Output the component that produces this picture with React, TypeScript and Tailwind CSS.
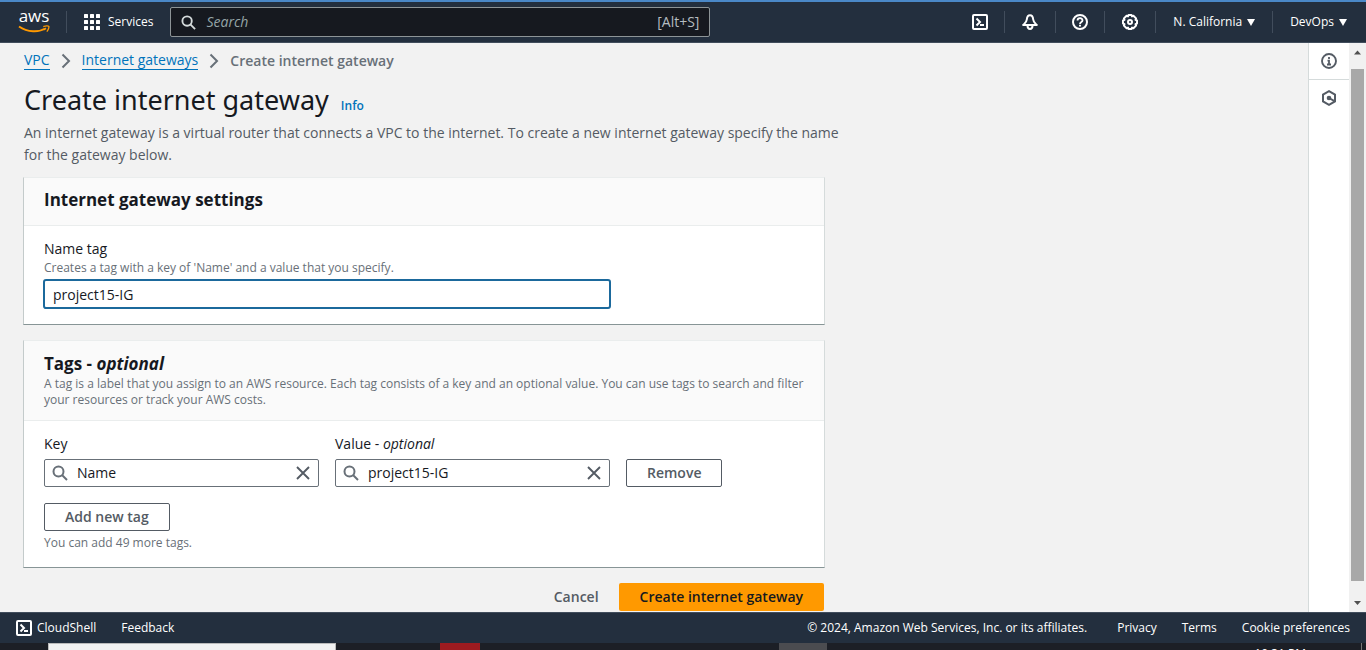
import React, { useState } from "react";

const divider = "h-[22px] w-px bg-[#414d5c]";

function TerminalIcon() {
  return (
    <svg viewBox="0 0 16 16" className="size-4 shrink-0" fill="none" stroke="currentColor" strokeWidth="2" strokeLinejoin="round">
      <rect x="1" y="1" width="14" height="14" rx="1" />
      <path d="M4.500 4.500 8 8l-3.500 3.500" strokeLinejoin="miter" />
      <path d="M8 11h4" />
    </svg>
  );
}

function BellIcon() {
  return (
    <svg viewBox="0 0 16 16" className="size-4" fill="none" stroke="currentColor" strokeWidth="2" strokeLinejoin="round">
      <path d="M8 1.200C5.800 1.200 5 3 4.800 5.500 4.600 8 3 9 1.200 11h13.600C13 9 11.400 8 11.200 5.500 11 3 10.200 1.200 8 1.200z" />
      <path d="M5.500 11.500c0 4.600 5 4.600 5 0" />
    </svg>
  );
}

function HelpIcon() {
  return (
    <svg viewBox="0 0 16 16" className="size-4" fill="none" stroke="currentColor" strokeWidth="2">
      <circle cx="8" cy="8" r="7" />
      <path d="M5.500 6.600C5.500 3.400 10.500 3.400 10.500 6.400 10.500 8 8 7.900 8 9.900" strokeWidth="1.800" />
      <path d="M8 10.700v1.800" strokeWidth="2" />
    </svg>
  );
}

function GearIcon() {
  return (
    <svg viewBox="0 0 16 16" className="size-4" fill="none" stroke="currentColor" strokeWidth="2" strokeLinejoin="round">
      <path d="M6.500 1h3l.5 1.400 1.400-.7 2.700 2.700-.6 1.500 1.500.6v3l-1.500.6.6 1.500-2.700 2.700-1.400-.7L9.500 15h-3L6 13.600l-1.400.7-2.700-2.700.6-1.500L1 9.500v-3l1.500-.6-.6-1.500 2.700-2.700 1.400.7z" />
      <circle cx="8" cy="8" r="2" />
    </svg>
  );
}

function SearchIcon({ className }: { className: string }) {
  return (
    <svg viewBox="0 0 16 16" className={className} fill="none" stroke="currentColor" strokeWidth="2">
      <circle cx="6.500" cy="6.500" r="5" />
      <path d="m10 10 5 5" />
    </svg>
  );
}

function CloseIcon() {
  return (
    <svg viewBox="0 0 16 16" className="size-4" fill="none" stroke="currentColor" strokeWidth="1.900">
      <path d="m2 2 12 12M14 2 2 14" />
    </svg>
  );
}

function Caret() {
  return (
    <svg viewBox="0 0 8 7" className="h-[7px] w-2" fill="currentColor">
      <path d="M0 0h8L4 7z" />
    </svg>
  );
}

function Chevron() {
  return (
    <svg viewBox="0 0 10 16" className="h-4 w-[10px] text-[#687078]" fill="none" stroke="currentColor" strokeWidth="2">
      <path d="m1.500 1.500 6.500 6.500-6.500 6.500" />
    </svg>
  );
}

function AwsLogo() {
  return (
    <a href="#home" aria-label="AWS home" className="flex w-8 flex-col items-center text-white">
      <span className="h-[14px] text-[17px] leading-[10px]">aws</span>
      <svg viewBox="0 0 32 9" className="h-[9px] w-8">
        <path d="M1 1.500C9.500 7.500 21 7.500 28 3.300" fill="none" stroke="#f90" strokeWidth="1.900" />
        <path d="M25.300 1.600c2-.8 5-.9 5.500-.2.400.8-.6 3.800-2 5.200" fill="none" stroke="#f90" strokeWidth="1.300" />
      </svg>
    </a>
  );
}

function Header() {
  return (
    <header className="flex h-[43px] shrink-0 items-center border-t-2 border-b border-t-[#4a88c7] border-b-[#414d5c] bg-[#232f3e] text-xs font-medium text-white">
      <div className="flex items-center pl-[18px]">
        <AwsLogo />
        <span className={`${divider} ml-4`} />
        <button className="ml-[17px] flex items-center gap-2">
          <svg viewBox="0 0 16 16" className="size-4" fill="currentColor">
            {[0, 6, 12].map((y) => [0, 6, 12].map((x) => <rect key={`${x}-${y}`} x={x} y={y} width="4" height="4" rx=".5" />))}
          </svg>
          Services
        </button>
      </div>
      <label className="ml-[17px] flex h-[30px] w-[540px] items-center rounded-[2px] border border-[#8d9496] bg-[#16191f] px-[10px] text-[#d5dbdb]">
        <SearchIcon className="size-[15px]" />
        <input aria-label="Search" placeholder="Search" className="ml-[10px] min-w-0 flex-1 bg-transparent text-sm font-normal outline-none placeholder:italic placeholder:text-[#95a5a6]" />
        <span className="text-sm font-normal text-[#b5bcc0]">[Alt+S]</span>
      </label>
      <div className="ml-auto flex items-center pr-[19px]">
        <button aria-label="CloudShell"><TerminalIcon /></button>
        <span className={`${divider} mx-4`} />
        <button aria-label="Notifications" className="px-px"><BellIcon /></button>
        <span className={`${divider} mx-4`} />
        <button aria-label="Help"><HelpIcon /></button>
        <span className={`${divider} mx-4`} />
        <button aria-label="Settings" className="px-px"><GearIcon /></button>
        <span className={`${divider} ml-4`} />
        <button className="ml-[17px] flex items-center gap-[5px]">N. California <Caret /></button>
        <span className={`${divider} mx-[17px]`} />
        <button className="flex items-center gap-[5px]">DevOps <Caret /></button>
      </div>
    </header>
  );
}

function Panel({ children }: { children: React.ReactNode }) {
  return (
    <section className="border border-t-[#eaeded] border-r-[#d5dbdb] border-b-[#879596] border-l-[#c4cbcb] bg-white">
      {children}
    </section>
  );
}

function TagField({ id, label, optional, value, onChange }: { id: string; label: string; optional?: boolean; value: string; onChange: (v: string) => void }) {
  return (
    <div className="w-[275px]">
      <label htmlFor={id} className="block leading-[22px]">
        {label}
        {optional && <> - <i>optional</i></>}
      </label>
      <div className="mt-1 flex h-7 items-center rounded-[2px] border border-[#687078] px-[7px] text-[#545b64]">
        <SearchIcon className="size-4 text-[#687078]" />
        <input id={id} value={value} onChange={(e) => onChange(e.target.value)} className="ml-[9px] min-w-0 flex-1 text-[#16191f] outline-none" />
        <button aria-label={`Clear ${label}`} onClick={() => onChange("")}><CloseIcon /></button>
      </div>
    </div>
  );
}

const outlineButton = "h-7 rounded-[2px] border border-[#545b64] bg-white px-5 font-semibold text-[#545b64]";

export default function App() {
  const [name, setName] = useState("project15-IG");
  const [key, setKey] = useState("Name");
  const [value, setValue] = useState("project15-IG");

  return (
    <div className="flex h-screen flex-col overflow-hidden bg-[#f2f2f2] font-['Open_Sans','Noto_Sans',sans-serif] text-sm text-[#16191f]">
      <Header />
      <div className="flex min-h-0 flex-1">
        <main className="min-w-0 flex-1 overflow-hidden px-6">
          <div className="max-w-[800px]">
            <nav aria-label="Breadcrumb" className="flex h-[35px] items-center gap-[11px] text-[#0073bb]">
              <a href="#vpc" className="border-b border-current leading-[18px]">VPC</a>
              <Chevron />
              <a href="#gateways" className="border-b border-current leading-[18px]">Internet gateways</a>
              <Chevron />
              <span className="font-semibold text-[#687078]">Create internet gateway</span>
            </nav>
            <div className="flex items-baseline gap-3">
              <h1 className="font-['Noto_Sans','Open_Sans',sans-serif] text-[27px] leading-[44px]">Create internet gateway</h1>
              <a href="#info" className="text-xs font-semibold text-[#0073bb]">Info</a>
            </div>
            <p className="-mr-5 leading-[22px] text-[#545b64]">
              An internet gateway is a virtual router that connects a VPC to the internet. To create a new internet gateway specify the name for the gateway below.
            </p>
            <div className="-mx-px mt-[11px] flex flex-col gap-[15px]">
              <Panel>
                <h2 className="border-b border-[#eaeded] bg-[#fafafa] px-5 pt-[11px] pb-[14px] text-[17px] leading-[22px] font-bold">Internet gateway settings</h2>
                <div className="px-5 pt-3 pb-[15px]">
                  <label htmlFor="name-tag" className="block leading-[22px]">Name tag</label>
                  <p className="text-xs leading-4 text-[#687078]">Creates a tag with a key of 'Name' and a value that you specify.</p>
                  <input
                    id="name-tag"
                    value={name}
                    onChange={(e) => setName(e.target.value)}
                    className="-mx-px mt-[3px] block h-[30px] w-[568px] rounded-[3px] border-2 border-[#1b699c] px-2 outline-none"
                  />
                </div>
              </Panel>
              <Panel>
                <div className="border-b border-[#eaeded] bg-[#fafafa] px-5 pt-[10px] pb-3">
                  <h2 className="text-[17px] leading-[25px] font-bold">Tags - <i>optional</i></h2>
                  <p className="-mr-1 text-xs leading-4 text-[#687078]">
                    A tag is a label that you assign to an AWS resource. Each tag consists of a key and an optional value. You can use tags to search and filter your resources or track your AWS costs.
                  </p>
                </div>
                <div className="px-5 pt-3 pb-4">
                  <div className="flex items-end gap-4">
                    <TagField id="tag-key" label="Key" value={key} onChange={setKey} />
                    <TagField id="tag-value" label="Value" optional value={value} onChange={setValue} />
                    <button className={outlineButton}>Remove</button>
                  </div>
                  <button className={`${outlineButton} mt-4`}>Add new tag</button>
                  <p className="mt-1 text-xs leading-4 text-[#687078]">You can add 49 more tags.</p>
                </div>
              </Panel>
            </div>
            <div className="mt-[15px] flex justify-end">
              <button className="h-7 px-5 font-semibold text-[#545b64]">Cancel</button>
              <button className="h-7 rounded-[2px] bg-[#ff9900] px-[21px] font-semibold text-[#16191f]">Create internet gateway</button>
            </div>
          </div>
        </main>
        <aside className="w-[41px] shrink-0 border-l border-[#d5dbdb] bg-white text-[#545b64]">
          <button aria-label="Info panel" className="flex h-[37px] w-full items-center justify-center border-b border-[#d5dbdb]">
            <svg viewBox="0 0 16 16" className="size-4" fill="none" stroke="currentColor" strokeWidth="1.900">
              <circle cx="8" cy="8" r="7" />
              <path d="M8 4v2M6.500 7.700H8v3.500M6 11.500h4" strokeWidth="1.800" />
            </svg>
          </button>
          <button aria-label="Tutorials panel" className="flex h-9 w-full items-center justify-center">
            <svg viewBox="0 0 16 16" className="size-4" fill="none" stroke="currentColor" strokeWidth="2">
              <path d="m8 1.200 6 3.400v6.800l-6 3.400-6-3.400V4.600z" />
              <circle cx="8" cy="8" r="2.300" fill="currentColor" stroke="none" />
              <path d="m8 8 5.500 3.200" />
            </svg>
          </button>
        </aside>
        <div aria-hidden="true" className="flex w-[17px] shrink-0 flex-col items-center bg-[#f1f1f1] text-[#505050]">
          <svg viewBox="0 0 17 17" className="h-[26px] w-[17px] shrink-0 pb-2" fill="currentColor"><path d="m5 11 3.500-4 3.500 4z" /></svg>
          <div className="w-[13px] flex-1 bg-[#a8a8a8]" />
          <svg viewBox="0 0 17 17" className="h-[31px] w-[17px] shrink-0 pt-3" fill="currentColor"><path d="m5 7 3.500 4L12 7z" /></svg>
        </div>
      </div>
      <footer className="flex h-[31px] shrink-0 items-center border-t border-[#414d5c] bg-[#232f3e] px-4 text-xs text-white">
        <button className="flex items-center gap-[5px]"><TerminalIcon />CloudShell</button>
        <button className="ml-[25px]">Feedback</button>
        <span className="ml-auto">© 2024, Amazon Web Services, Inc. or its affiliates.</span>
        <a href="#privacy" className="ml-[30px]">Privacy</a>
        <a href="#terms" className="ml-[25px]">Terms</a>
        <a href="#cookies" className="ml-[25px]">Cookie preferences</a>
      </footer>
      <div className="flex h-[7px] shrink-0 overflow-hidden bg-[#1c1f26] text-white">
        <div className="ml-12 w-72 border-x border-t border-[#bbb] bg-[#f2f2f2]" />
        <div className="ml-[104px] w-10 bg-[#9c1b20]" />
        <div className="ml-[299px] w-12 bg-[#4b4c50]" />
        <span className="mr-[55px] ml-auto pt-1 text-xs leading-[14px]">10:31 PM</span>
        <div className="mr-1 w-px bg-[#777]" />
      </div>
    </div>
  );
}
